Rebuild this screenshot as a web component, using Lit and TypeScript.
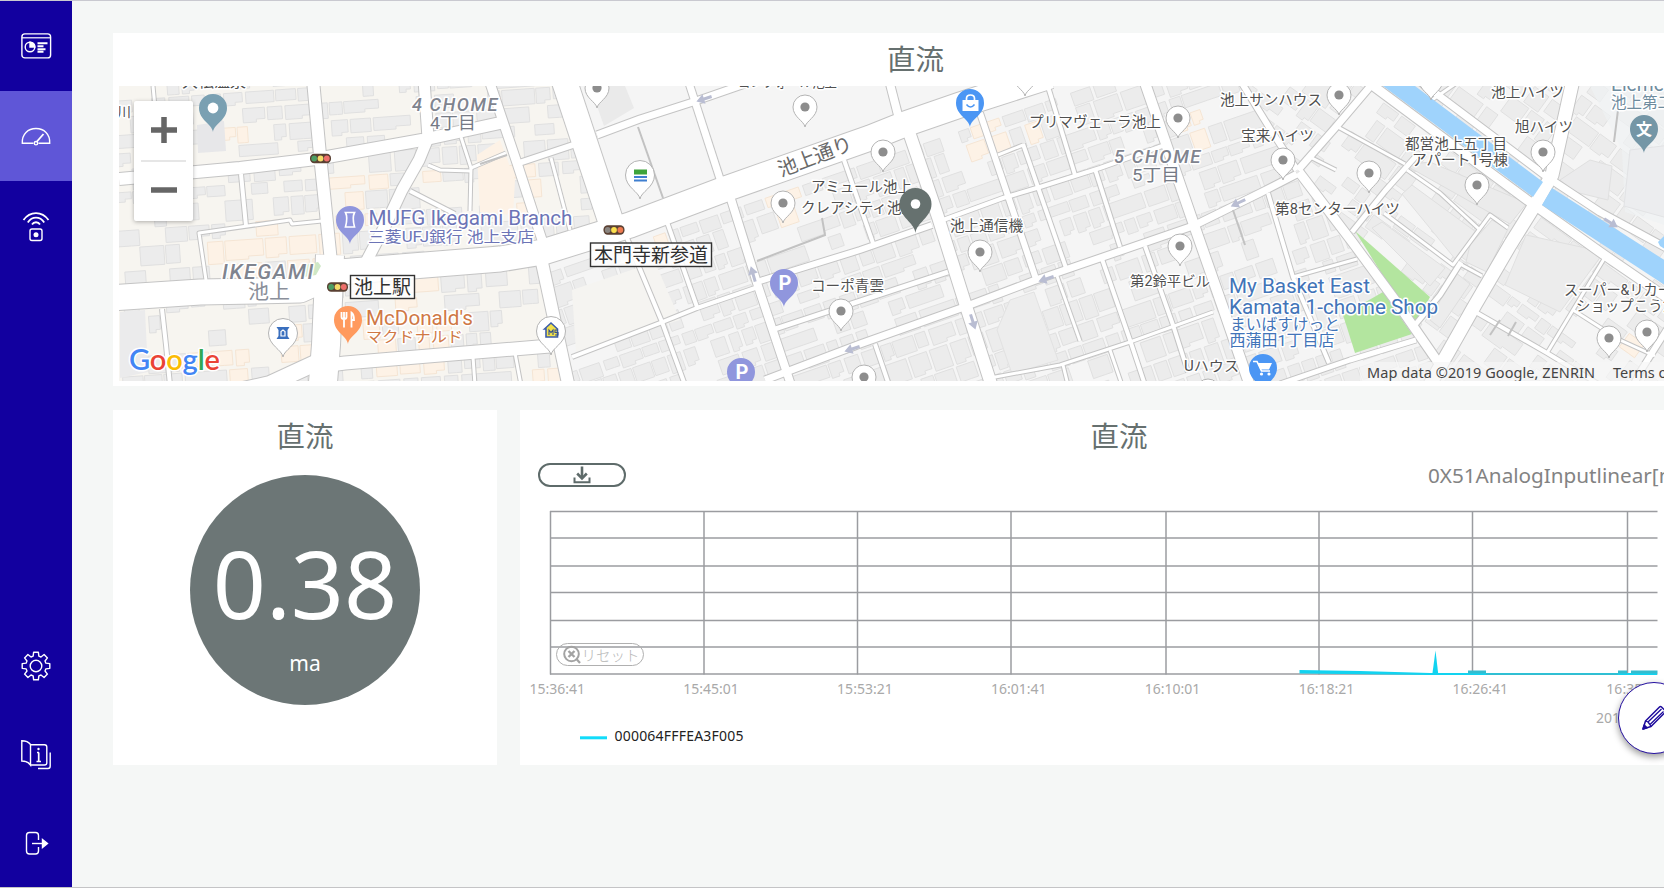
import { LitElement, html, svg, css } from "lit";
import { customElement } from "lit/decorators.js";

/* ---------- map data ---------- */

type Road = [number, string];

const ROADS: Road[] = [
  [12, "119,179 240,168 316,159 422,140 500,123"],
  [12, "313,80 320,155 331,262"],
  [11, "424,80 428,138 419,160 402,190 387,222 366,262"],
  [9, "489,80 517,163 543,243"],
  [3, "461,137 471,168 506,153"],
  [3, "471,168 470,211"],
  [3, "428,165 440,170 471,171"],
  [4, "410,191 455,214"],
  [3, "153,86 156,118"],
  [4, "241,174 246,226"],
  [3, "206,280 199,233 290,220 292,224 322,221"],
  [4, "162,309 166,345 170,385"],
  [25, "110,298 200,292 300,290 340,272 400,267 500,259 543,252 630,225 728,188 870,138 905,124 960,105 1050,76"],
  [28, "330,255 328,300 326,345 322,395"],
  [13, "322,366 345,363 440,355 550,346"],
  [16, "322,360 270,384 190,402"],
  [3, "473,357 475,385"],
  [3, "515,353 521,385"],
  [12, "541,258 569,388"],
  [25, "564,80 611,222"],
  [6, "519,163 573,145"],
  [3, "551,158 570,230"],
  [7, "597,135 640,119 693,102 745,84"],
  [7, "688,80 721,182"],
  [8, "730,196 757,283 792,388"],
  [4, "667,222 697,307"],
  [4, "627,238 662,322 685,385"],
  [4, "572,357 660,323 697,308 758,287"],
  [6, "760,281 860,250 932,225"],
  [5, "775,329 860,301 948,272"],
  [7, "765,380 860,344 967,306 1033,281 1100,258 1193,226 1260,193 1297,174"],
  [4, "844,160 874,246"],
  [8, "889,80 898,115"],
  [12, "909,132 938,217 965,303 993,390"],
  [6, "980,113 1008,196 1037,282"],
  [4, "1023,144 1066,268"],
  [3, "998,155 1023,145"],
  [3, "1057,276 1080,341"],
  [4, "1046,80 1075,175"],
  [4, "943,220 1003,198 1040,187 1100,168 1165,145"],
  [4, "1095,169 1120,247"],
  [10, "1144,80 1193,222 1222,305 1252,392"],
  [4, "1145,246 1173,325 1188,372"],
  [4, "1102,259 1130,340 1145,385"],
  [3, "990,378 1060,365 1130,342 1213,312"],
  [3, "1110,350 1122,385"],
  [3, "1063,365 1068,385"],
  [4, "875,344 889,385"],
  [6, "1240,80 1272,132 1297,170"],
  [9, "1299,172 1353,243 1395,300 1440,365"],
  [7, "1298,170 1335,128 1374,82"],
  [9, "1368,82 1450,143 1530,202 1600,252 1670,300"],
  [7, "1418,80 1547,177 1600,212 1670,250"],
  [13, "1573,80 1552,175 1533,208 1510,245 1475,305 1428,388"],
  [5, "1352,232 1385,191 1417,155"],
  [3, "1336,126 1405,164"],
  [3, "1310,157 1336,170"],
  [3, "1407,170 1440,193 1480,230"],
  [3, "1384,213 1453,265 1490,215 1508,228"],
  [5, "1461,262 1440,295 1415,325"],
  [3, "1460,264 1482,276"],
  [5, "1280,384 1350,360 1416,340"],
  [4, "1268,193 1293,277 1329,363"],
  [3, "1293,277 1357,259"],
  [4, "1472,310 1547,353 1600,385"],
  [3, "1604,259 1573,310 1547,353"],
  [3, "1573,310 1620,340 1655,356"],
  [6, "1674,318 1640,372 1632,388"],
  [3, "1432,100 1458,82"],
];

const DARK_LINES = ["638,127 663,198", "1233,210 1245,245", "757,261 825,235 822,218", "480,164 507,155", "1620,94 1614,142", "1500,320 1490,335", "1516,322 1508,336"];

const REGIONS = [
  { id: "west", clip: "119,86 560,86 605,217 545,250 575,381 119,381", angle: -4, ox: 100, oy: 60, w: 560, h: 400, seed: 7, keep: 0.68 },
  { id: "mid", clip: "556,86 1246,86 1300,172 1436,360 1428,381 575,381 545,250 605,217", angle: -19, ox: 470, oy: 300, w: 1000, h: 560, seed: 21, keep: 0.86 },
  { id: "east", clip: "1246,86 1711,86 1711,381 1428,381 1436,360 1300,172", angle: 36, ox: 1400, oy: -140, w: 560, h: 560, seed: 5, keep: 0.74 },
];

const CREAM: [number, number, number][] = [
  [240, 248, 34], [300, 245, 22], [215, 345, 36], [268, 345, 32], [352, 190, 32], [430, 180, 26], [510, 190, 32],
  [400, 320, 50], [540, 370, 20], [815, 105, 24], [775, 195, 22], [980, 140, 22], [1017, 110, 22], [1183, 120, 20],
  [690, 165, 14], [930, 290, 22], [232, 135, 22], [642, 233, 18], [910, 93, 14], [1636, 340, 10],
];

function rng(seed: number) {
  let s = seed * 9301 + 49297;
  return () => {
    s = (s * 1664525 + 1013904223) % 4294967296;
    return s / 4294967296;
  };
}

/* Rows of buildings laid out along the street direction of one region. */
function buildings(r: (typeof REGIONS)[number]) {
  const rand = rng(r.seed);
  const a = (r.angle * Math.PI) / 180;
  const out = { grey: "", cream: "" };
  const pt = (x: number, y: number) => [r.ox + x * Math.cos(a) - y * Math.sin(a), r.oy + x * Math.sin(a) + y * Math.cos(a)];
  let y = 0;
  while (y < r.h) {
    const rowH = 15 + rand() * 10;
    let x = rand() * 10;
    while (x < r.w) {
      const w = 10 + rand() * (rand() > 0.8 ? 32 : 12);
      const h = rowH - 1.5 - rand() * 5;
      if (rand() < r.keep) {
        const notch = rand() > 0.6 ? 3 : 0;
        const p = [[x, y], [x + w, y], [x + w, y + h - notch], [x + w * 0.6, y + h - notch], [x + w * 0.6, y + h], [x, y + h]].map(([u, v]) => pt(u, v));
        const near = CREAM.some(([cx, cy, cr]) => Math.hypot(p[0][0] - cx, p[0][1] - cy) < cr);
        out[near && rand() > 0.25 ? "cream" : "grey"] += "M" + p.map((q) => q[0].toFixed(1) + " " + q[1].toFixed(1)).join("L") + "Z";
      }
      x += w + 1.5 + rand() * 3;
    }
    y += rowH;
  }
  return out;
}

type Label = [string, number, number, number, number, string];
/* text, x, baseline, size, width, class */
const LABELS: Label[] = [
  ["大松温泉", 182, 87, 16, 64, "poi"],
  ["川", 117, 117, 14, 14, "poi"],
  ["4 CHOME", 412, 111, 17.5, 87, "area"],
  ["4丁目", 430, 129, 17, 46, "areaj"],
  ["IKEGAMI", 222, 279, 19.5, 93, "area"],
  ["池上", 248, 299, 20, 42, "areaj light"],
  ["MUFG Ikegami Branch", 368.5, 225, 20, 204, "bank"],
  ["三菱UFJ銀行 池上支店", 368, 242, 15, 166, "bank"],
  ["McDonald's", 366, 325, 20, 107, "food"],
  ["マクドナルド", 366, 342, 15, 97, "food"],
  ["コンフォール池上", 738, 87, 14.5, 99, "poi"],
  ["アミュール池上", 811, 192, 14.5, 101, "poi"],
  ["クレアシティ池上", 801, 213, 14.5, 115, "poi"],
  ["コーポ青雲", 811, 290.5, 14.5, 73, "poi"],
  ["池上通信機", 950, 231, 14.5, 73, "poi"],
  ["プリマヴェーラ池上", 1029, 127, 14.5, 132, "poi"],
  ["5 CHOME", 1114, 163, 17.5, 88, "area"],
  ["5丁目", 1132, 181, 17, 48, "areaj"],
  ["第2鈴平ビル", 1130, 286, 14.2, 80, "poi"],
  ["Uハウス", 1184, 371, 14.2, 55, "poi"],
  ["池上サンハウス", 1220, 105, 14.5, 102, "poi"],
  ["宝来ハイツ", 1241, 140.5, 14.5, 73, "poi"],
  ["第8センターハイツ", 1275, 213.5, 14.5, 125, "poi"],
  ["都営池上五丁目", 1405, 148.5, 14.5, 102, "poi"],
  ["アパート1号棟", 1412, 165, 14.5, 96, "poi"],
  ["池上ハイツ", 1491, 96.5, 14.5, 73, "poi"],
  ["旭ハイツ", 1515, 132, 14.5, 58, "poi"],
  ["Elementary", 1611, 91, 20, 96, "school"],
  ["池上第二", 1611, 108, 15.5, 62, "school"],
  ["スーパー&リカー", 1564, 295, 14.5, 108, "poi"],
  ["ショップこうだ", 1576, 311, 14.5, 101, "poi"],
  ["My Basket East", 1229, 293, 20, 141, "shop"],
  ["Kamata 1-chome Shop", 1229, 313.5, 20, 209, "shop"],
  ["まいばすけっと", 1230, 330, 15.5, 110, "shop"],
  ["西蒲田1丁目店", 1229.5, 346, 15.5, 105, "shop"],
];

const PINS: [number, number][] = [
  [597, 88], [805, 107], [783, 203], [883, 152], [1025, 76], [841, 311], [864, 377], [980, 252], [1178, 118],
  [1180, 246], [1339, 95], [1283, 160], [1369, 173], [1477, 185], [1543, 152], [1609, 338], [1647, 332], [1431, 80], [1208, 391],
];

/* x, y, angle */
const ARROWS: [number, number, number][] = [
  [704, 99, 162], [753, 274, -106], [1046, 279, 162], [973, 322, 72], [852, 349, 162], [1238, 203, 155], [1611, 223, 32],
];

const drop = (x: number, y: number, r: number, tip: number) =>
  `M${x} ${y + tip}C${x - 1} ${y + r * 1.15} ${x - r} ${y + r * 0.85} ${x - r} ${y}A${r} ${r} 0 0 1 ${x + r} ${y}C${x + r} ${y + r * 0.85} ${x + 1} ${y + r * 1.15} ${x} ${y + tip}Z`;

const light = (x: number, y: number, c: string[]) => svg`
  <rect x=${x - 10.5} y=${y - 4.8} width="21" height="9.6" rx="4.2" fill="#5a4032"/>
  ${c.map((f, i) => svg`<circle cx=${x - 6.3 + i * 6.3} cy=${y} r="2.9" fill=${f}/>`)}`;

@customElement("site-map")
class SiteMap extends LitElement {
  static styles = css`
    :host { display: block; position: relative; width: 1592px; height: 295px; overflow: hidden; }
    .canvas { display: block; font-family: Roboto, "Noto Sans CJK JP", sans-serif; }
    .lbl { paint-order: stroke; stroke: #fff; stroke-width: 3px; stroke-linejoin: round; }
    .poi { fill: #505050; }
    .area { fill: #7f848f; font-style: italic; font-weight: 500; letter-spacing: 1.5px; }
    .areaj { fill: #757a85; }
    .light { fill: #8a8f9a; }
    .bank { fill: #6c74b6; }
    .food { fill: #cf7845; }
    .shop { fill: #4274b8; }
    .school { fill: #6f8c9e; }
    .street { fill: #6a6a6a; }
    .sign { fill: #303030; }
    .legal { font-family: "Noto Sans", sans-serif; fill: #444; }
    .brand { font-family: Lato, sans-serif; font-weight: 600; }
    .zoom {
      position: absolute; left: 15px; top: 15px; width: 59px; height: 120px; box-sizing: border-box; padding: 0 7px;
      display: flex; flex-direction: column; background: #fff; border-radius: 2px; box-shadow: 0 1px 4px rgba(0, 0, 0, 0.3);
    }
    .zoom button { flex: 1; display: grid; place-items: center; border: 0; padding: 0 0 1px; background: none; }
    .zoom button + button { border-top: 2px solid #e6e6e6; padding-bottom: 2px; }
  `;

  render() {
    return html`
      <svg class="canvas" width="1592" height="295" viewBox="119 86 1592 295">
        <rect x="119" y="86" width="1592" height="295" fill="#f5f5f5"/>
        <polygon points=${REGIONS[0].clip} fill="#f7f5f0"/>
        ${REGIONS.map((r) => {
          const b = buildings(r);
          return svg`
            <clipPath id=${r.id}><polygon points=${r.clip}/></clipPath>
            <g clip-path="url(#${r.id})">
              <path d=${b.grey} fill="#ececec" stroke="#e0e0e0" stroke-width="1"/>
              <path d=${b.cream} fill="#fdf2e6" stroke="#f5e5d4" stroke-width="1"/>
            </g>`;
        })}
        <polygon points="572,290 655,262 680,320 576,352" fill="#f5f4f1"/>
        <polygon points="120,312 145,310 148,372 120,378" fill="#ebebec"/>
        <polygon points="197,125 224,121 226,151 198,153" fill="#e7e7e9"/>
        <polygon points="590,86 625,86 634,108 604,126" fill="#eaeaea"/>
        <polygon points="477,155 500,140 515,180 513,215 480,212" fill="#fdf2e6"/>
        <polygon points="1010,300 1034,292 1058,360 1012,374 997,330" fill="#ededed" stroke="#e2e2e2"/>
        <polygon points="1526,235 1604,252 1560,312 1505,285" fill="#ececec" stroke="#e0e0e0"/>
        <polygon points="1405,165 1430,162 1527,203 1510,224" fill="#ebebeb" stroke="#dedede"/>
        <polygon points="1402,194 1412,185 1476,232 1456,260" fill="#ededed" stroke="#e0e0e0"/>
        <polygon points="1372,228 1382,222 1445,268 1430,286" fill="#ededed" stroke="#e0e0e0"/>
        <polygon points="1470,245 1492,220 1508,229 1487,272 1466,262" fill="#ececec" stroke="#dedede"/>
        <polygon points="1430,320 1455,272 1470,284 1440,328" fill="#ececec" stroke="#dedede"/>
        <polygon points="1560,180 1590,160 1612,166 1608,200 1575,192" fill="#ebebec" stroke="#e0e0e0"/>
        <polygon points="1590,86 1711,86 1711,240 1625,212 1622,150" fill="#f0f2f4" fill-opacity="0.7"/>
        <polygon points="1630,150 1711,140 1711,230 1624,206" fill="#ecedef" stroke="#e2e3e5"/>
        <polygon points="1355,231 1430,297 1414,325" fill="#b3e59f"/>
        <polygon points="1343,315 1383,292 1412,334 1355,353" fill="#b3e59f"/>
        ${ROADS.map(([w, p]) => svg`<polyline points=${p} fill="none" stroke="#c4c4c4" stroke-width=${w + 2} stroke-linejoin="round"/>`)}
        ${ROADS.map(([w, p]) => svg`<polyline points=${p} fill="none" stroke="#fff" stroke-width=${w} stroke-linejoin="round"/>`)}
        <polygon points="305,265 318,262 321,266 316,275 304,277" fill="#cfe8c6"/>
        ${DARK_LINES.map((p) => svg`<polyline points=${p} fill="none" stroke="#c2c2c2" stroke-width="2"/>`)}
        <polygon points="1383,86 1415,86 1543,182 1533,197" fill="#9fd3fc"/>
        <polygon points="1552,188 1711,290 1711,315 1542,205" fill="#9fd3fc"/>
        <polygon points="1658,242 1664,236 1675,255 1660,246" fill="#9fd3fc"/>
        ${ARROWS.map(([x, y, a]) => svg`<path transform="translate(${x} ${y}) rotate(${a})" d="M-8 -1.5H0V-5L8 0L0 5V1.5H-8Z" fill="#b9bdd2"/>`)}

        ${PINS.map(([x, y]) => svg`
          <path d=${drop(x, y, 12, 20)} fill="#fff" stroke="#b4b4b4" stroke-width="1"/>
          <circle cx=${x} cy=${y} r="4.6" fill="#8d8d8d"/>`)}
        ${[[640, 175], [551, 331], [283, 333]].map(([x, y]) => svg`<path d=${drop(x, y, 14.5, 24)} fill="#fff" stroke="#b4b4b4"/>`)}
        <rect x="634" y="169.5" width="13" height="5" fill="#3ea43a"/>
        <path d="M634 177H647M634 180.5H647" stroke="#3f7fd0" stroke-width="2"/>
        <path d="M544.5 329L551 323L557.5 329V337H546V329Z" fill="#f2e14a" stroke="#3c5ca8" stroke-width="1.6"/>
        <path d="M549 335V330L551 332.5L553 330V335M558 330H555V332.5H558V335H555" fill="none" stroke="#33508f" stroke-width="1.1"/>
        <path d="M276.5 327H289.5L287.5 330V336L289.5 339H276.5L278.5 336V330Z" fill="#3a6fbe"/>
        <path d="M281 336V331.5L283 330L285 331.5V336Z" fill="#3a6fbe" stroke="#fff" stroke-width="1.2"/>

        <path d=${drop(213, 108, 14, 24)} fill="#7aa0b2"/><circle cx="213" cy="108" r="5.4" fill="#fff"/>
        <path d=${drop(350, 220, 14, 24)} fill="#9096dd"/>
        <path d="M345.5 212.5H354.5Q352 217.5 354.5 227H345.5Q348 217.5 345.5 212.5Z" fill="none" stroke="#fff" stroke-width="1.7"/>
        <path d=${drop(348, 320, 14, 24)} fill="#ff9a5e"/>
        <path d="M341.5 312V317Q341.5 319 344 319Q346.5 319 346.5 317V312M344 312V327.5M351.5 327.5V312.5Q354 314 354 320H351.5" fill="none" stroke="#fff" stroke-width="1.8"/>
        ${[[784, 283], [741, 372]].map(([x, y]) => svg`
          <path d=${drop(x, y, 14, 24)} fill="#9096dd"/>
          <text x=${x + 1} y=${y + 7} text-anchor="middle" font-size="20" font-weight="700" fill="#fff">P</text>`)}
        <path d=${drop(970, 103, 14, 24)} fill="#4b96f4"/>
        <path d="M962.5 100H978.5V111H962.5Z" fill="#fff"/>
        <path d="M966.5 101V98.5Q966.5 95 970.5 95Q974.5 95 974.5 98.5V101" fill="none" stroke="#fff" stroke-width="1.7"/>
        <path d="M966.5 104.5Q970.5 109.5 974.5 104.5" fill="none" stroke="#4b96f4" stroke-width="1.6"/>
        <path d=${drop(1263, 368, 14, 24)} fill="#4b96f4"/>
        <path d="M1253 361.5H1257L1261.5 371H1270" fill="none" stroke="#fff" stroke-width="1.6"/>
        <path d="M1257.5 363H1272L1269 369.5H1260.5Z" fill="#fff"/>
        <circle cx="1261.5" cy="374" r="1.6" fill="#fff"/><circle cx="1269" cy="374" r="1.6" fill="#fff"/>
        <path d=${drop(1644, 129, 14, 24)} fill="#7496a6"/>
        <text x="1644" y="135" text-anchor="middle" font-size="16" font-weight="700" fill="#fff">文</text>

        ${LABELS.map(([t, x, y, s, w, c]) => svg`<text class="lbl ${c}" x=${x} y=${y} font-size=${s} textLength=${w} lengthAdjust="spacingAndGlyphs">${t}</text>`)}
        <text class="lbl street" transform="translate(781 177) rotate(-21)" font-size="20" textLength="78">池上通り</text>

        <rect x="350.5" y="275.5" width="64" height="23" fill="#fff" fill-opacity="0.85" stroke="#333" stroke-width="1.4"/>
        <text class="sign" x="354" y="294" font-size="19" textLength="57">池上駅</text>
        <rect x="590.5" y="243" width="121" height="23.5" fill="#fff" fill-opacity="0.85" stroke="#333" stroke-width="1.4"/>
        <text class="sign" x="594" y="261.5" font-size="19" textLength="114">本門寺新参道</text>
        ${light(320.5, 158.5, ["#4d9d63", "#f5dc6a", "#ee6f6b"])}
        ${light(337.5, 287, ["#4d9d63", "#f5dc6a", "#ee6f6b"])}
        ${light(614, 230, ["#8a8580", "#fbe04e", "#ee7b50"])}

        <path d=${drop(915.5, 204, 16, 29)} fill="#66716f"/><circle cx="915.5" cy="204" r="4.8" fill="#fff"/>

        <rect x="1360" y="362" width="351" height="19" fill="#f7f7f7" fill-opacity="0.7"/>
        <text class="legal" x="1367" y="378" font-size="14.5" textLength="228">Map data ©2019 Google, ZENRIN</text>
        <text class="legal" x="1613" y="378" font-size="14.5">Terms of Use</text>
        <text class="brand lbl" x="129" y="370" font-size="29" textLength="91"><tspan fill="#4285f4">G</tspan><tspan fill="#ea4335">o</tspan><tspan fill="#fbbc05">o</tspan><tspan fill="#4285f4">g</tspan><tspan fill="#34a853">l</tspan><tspan fill="#ea4335">e</tspan></text>
      </svg>
      <div class="zoom">
        <button aria-label="Zoom in"><svg width="26" height="26"><path d="M13 0V26M0 13H26" stroke="#666" stroke-width="5.5"/></svg></button>
        <button aria-label="Zoom out"><svg width="26" height="26"><path d="M0 13H26" stroke="#666" stroke-width="5.5"/></svg></button>
      </div>`;
  }
}

/* ---------- chart ---------- */

const COLS = [550.5, 704, 857.5, 1011, 1166, 1319, 1472.5, 1627.5];
const ROWS = [511.5, 538, 566, 592.5, 620.5, 647, 674];
const TIMES = ["15:36:41", "15:45:01", "15:53:21", "16:01:41", "16:10:01", "16:18:21", "16:26:41", "16:35:01"];

@customElement("line-chart")
class LineChart extends LitElement {
  static styles = css`
    :host { display: flex; flex-direction: column; position: relative; }
    .bar { display: flex; justify-content: space-between; align-items: flex-start; height: 32px; padding: 0 0 0 18px; }
    .pill { box-sizing: border-box; width: 88px; height: 24px; border-radius: 12px; border: 2px solid #5e6b6a; background: #fff; padding: 0; display: flex; align-items: center; justify-content: center; }
    .unit { width: 290px; margin-top: -2px; font-size: 20.7px; line-height: 28px; color: #838383; white-space: nowrap; }
    .plot { display: block; font-family: "Noto Sans", sans-serif; }
    .tick { fill: #a9a9a9; }
    .reset {
      position: absolute; left: 36px; top: 180px; border: 1.5px solid #b0b0b0; height: 23px; gap: 1px; padding-left: 2px;
      font: 300 14.5px/20px "Noto Sans CJK JP", sans-serif; color: #b5b5b5; background: none;
    }
  `;

  render() {
    return html`
      <div class="bar">
        <button class="pill" aria-label="Download">
          <svg width="18" height="18" viewBox="0 0 18 18" fill="none" stroke="#5e6b6a"><path d="M9 .5V12" stroke-width="2.6"/><path d="M4.2 7.5L9 12.3L13.800 7.500" stroke-width="2.600"/><path d="M1.500 11.500V16.300H16.500V11.500" stroke-width="2"/></svg>
        </button>
        <span class="unit">0X51AnalogInputlinear[ma]</span>
      </div>
      <svg class="plot" width="1197" height="255" viewBox="520 495 1197 255">
        <g stroke="#9b9ca0" stroke-width="1.5">
          ${ROWS.map((y) => svg`<line x1="550" x2="1657.5" y1=${y} y2=${y}/>`)}
          ${COLS.map((x) => svg`<line x1=${x} x2=${x} y1="511" y2="674.5"/>`)}
        </g>
        <path d="M1299.5 670L1360 671L1430 673H1485L1657 673V675H1430L1299.5 673.5Z" fill="#12d3f0"/>
        <path d="M1432.3 674.5L1435.500 650.500L1438.300 674.500Z" fill="#12d3f0"/>
        <path d="M1468 672H1486M1618 672H1627M1631 672H1657.500" stroke="#35bccf" stroke-width="3"/>
        <path d="M1486 674.200H1618" stroke="#35bccf" stroke-width="1.800"/>
        ${TIMES.map((t, i) => svg`<text class="tick" x=${557.2 + i * 153.85} y="694" font-size="14" text-anchor="middle">${t}</text>`)}
        <text class="tick" x="1596" y="723" font-size="14">2019/07/10</text>
        <line x1="580" x2="607" y1="737.800" y2="737.800" stroke="#12dcfa" stroke-width="3"/>
        <text x="614.500" y="741" font-size="14" fill="#222" textLength="129">000064FFFEA3F005</text>
      </svg>
      <button class="pill reset">
        <svg width="18" height="19" viewBox="0 0 18 19" fill="none" stroke="#a3a3a3"><circle cx="8.500" cy="9" r="7.300" stroke-width="2"/><path d="M13 13.500L17 18" stroke-width="2.200"/><path d="M5.500 6L11.500 12M11.500 6L5.500 12" stroke-width="2.400"/></svg>リセット
      </button>`;
  }
}

/* ---------- shell ---------- */

function gearPath() {
  const pts: string[] = [];
  for (let i = 0; i < 8; i++) {
    for (const [d, r] of [[-0.28, 10.3], [-0.17, 14], [0.17, 14], [0.28, 10.3]]) {
      const a = (i * Math.PI) / 4 + d;
      pts.push(`${(15 + r * Math.sin(a)).toFixed(2)} ${(15 - r * Math.cos(a)).toFixed(2)}`);
    }
  }
  return "M" + pts.join("L") + "Z";
}

const ICONS = {
  dashboard: svg`<rect x=".9" y="2.9" width="28.7" height="24" rx="3"/><path d="M1 6.800H29.500" stroke-width="1.200"/><circle cx="9" cy="16" r="4.800"/><path d="M9 11.200V16H13.800A4.800 4.800 0 0 0 9 11.200Z" fill="#fff"/><path d="M16.500 12.300H26.500M16.500 15.300H22.500M16.500 18.200H24.500M16.500 20.800H22.500" stroke-width="2"/>`,
  gauge: svg`<path d="M12.500 22.200H1.300C.8 13 7 7.500 15 7.500S29.200 13 28.700 22.200H17.500"/><path d="M15.500 21L22.500 13" stroke-width="1.800"/><circle cx="15" cy="22.200" r="1.700"/>`,
  sensor: svg`<path d="M2.500 9C9 -.2 21 -.2 27.500 9M6.800 11.500C11 5 19 5 23.200 11.500M11 13.500C12.800 10.500 17.200 10.500 19 13.500" stroke-width="1.800"/><rect x="9" y="18" width="12" height="11.500" rx="2"/><circle cx="15" cy="23.700" r="2.500" fill="#fff" stroke="none"/>`,
  gear: svg`<path d=${gearPath()} stroke-linejoin="round"/><circle cx="15" cy="15" r="5.800"/>`,
  manual: svg`<path d="M9.500 4.500C7 1.200 4 .8 .8 .8V21C4 21 7 21.500 9.500 25Z"/><path d="M9.500 4.800H23.500Q25.800 4.800 25.800 7V22.700Q25.800 25 23.500 25H9.500"/><path d="M29.200 12.500V26Q29.200 28.500 27 28.500H17"/><path d="M17.700 12.500V21.500M15.500 21.500H20M16 12.500H18" stroke-width="1.700"/><circle cx="17.500" cy="9" r="1.200" fill="#fff" stroke="none"/>`,
  logout: svg`<path d="M17.500 12V7.500Q17.500 4.500 14.500 4.500H8.500Q5.500 4.500 5.500 7.500V23Q5.500 26 8.500 26H14.500Q17.500 26 17.500 23V19"/><path d="M11 15.500H22"/><path d="M21.500 11.500L26.500 15.500L21.500 19.500Z" fill="#fff"/>`,
};

@customElement("app-root")
class AppRoot extends LitElement {
  static styles = css`
    :host { display: flex; position: relative; box-sizing: border-box; width: 100%; height: 888px; overflow: hidden; background: #f5f7f6; border-top: 1px solid #c9c9d0; border-bottom: 1px solid #c4c4c6; font-family: "Noto Sans", "Noto Sans CJK JP", sans-serif; color: #66706f; }
    .side { flex: 0 0 72px; display: flex; flex-direction: column; background: #12009f; }
    .item { height: 90px; display: grid; place-items: center; flex: none; padding: 0 1px 0 0; box-sizing: border-box; }
    .item svg { width: 30px; height: 30px; fill: none; stroke: #fff; stroke-width: 1.4px; overflow: visible; }
    .on { background: #5f56d7; }
    .low { height: 88.5px; padding-top: 1px; }
    .push { margin-top: auto; }
    .main { flex: none; width: 1605px; margin: 32px 0 0 41px; display: grid; grid-template-columns: 384px 1198px; grid-template-rows: 353px 355px; gap: 24px 23px; }
    .card { background: #fff; display: flex; flex-direction: column; min-width: 0; }
    .wide { grid-column: 1 / 3; }
    .title { margin: 0; height: 53px; text-align: center; font: 400 28.5px/50px "Noto Sans CJK JP", sans-serif; }
    .map { margin: 0 6px; }
    .dial { align-self: center; width: 230px; height: 230px; margin-top: 12px; border-radius: 50%; background: #6c7676; color: #fff; display: flex; flex-direction: column; align-items: center; }
    .num { font-size: 93px; line-height: 100px; margin-top: 58px; }
    .sub { font-size: 21px; line-height: 30px; margin-top: 15px; }
    .fab { position: absolute; left: 1618px; top: 681px; width: 72px; height: 72px; box-sizing: border-box; border-radius: 50%; border: 1.5px solid #2410a0; background: #fff; padding: 0; display: grid; place-items: center; box-shadow: 0 3px 7px rgba(0, 0, 0, 0.4); }
  `;

  render() {
    const item = (k: keyof typeof ICONS, cls = "") => html`<div class="item ${cls}"><svg viewBox="0 0 30 30">${ICONS[k]}</svg></div>`;
    return html`
      <nav class="side">
        ${item("dashboard")}${item("gauge", "on")}${item("sensor")}
        ${item("gear", "low push")}${item("manual", "low")}${item("logout", "low")}
      </nav>
      <main class="main">
        <section class="card wide"><h2 class="title">直流</h2><site-map class="map"></site-map></section>
        <section class="card">
          <h2 class="title">直流</h2>
          <div class="dial"><div class="num">0.38</div><div class="sub">ma</div></div>
        </section>
        <section class="card"><h2 class="title">直流</h2><line-chart></line-chart></section>
      </main>
      <button class="fab" aria-label="Edit">
        <svg width="26" height="26" viewBox="0 0 26 26" fill="none" stroke="#1c0a9c" stroke-width="1.5" stroke-linejoin="round"><path d="M2 24L4.500 16L18.500 2Q19.500 1 20.500 2L24 5.500Q25 6.500 24 7.500L10 21.500Z"/><path d="M4.500 16L7 17L8.500 19L10 21.500M7 17L20.500 4M9 19.500L22.500 6.500" stroke-width="1.300"/><path d="M2 24L3.200 20L6 22.800Z" fill="#1c0a9c"/></svg>
      </button>`;
  }
}
